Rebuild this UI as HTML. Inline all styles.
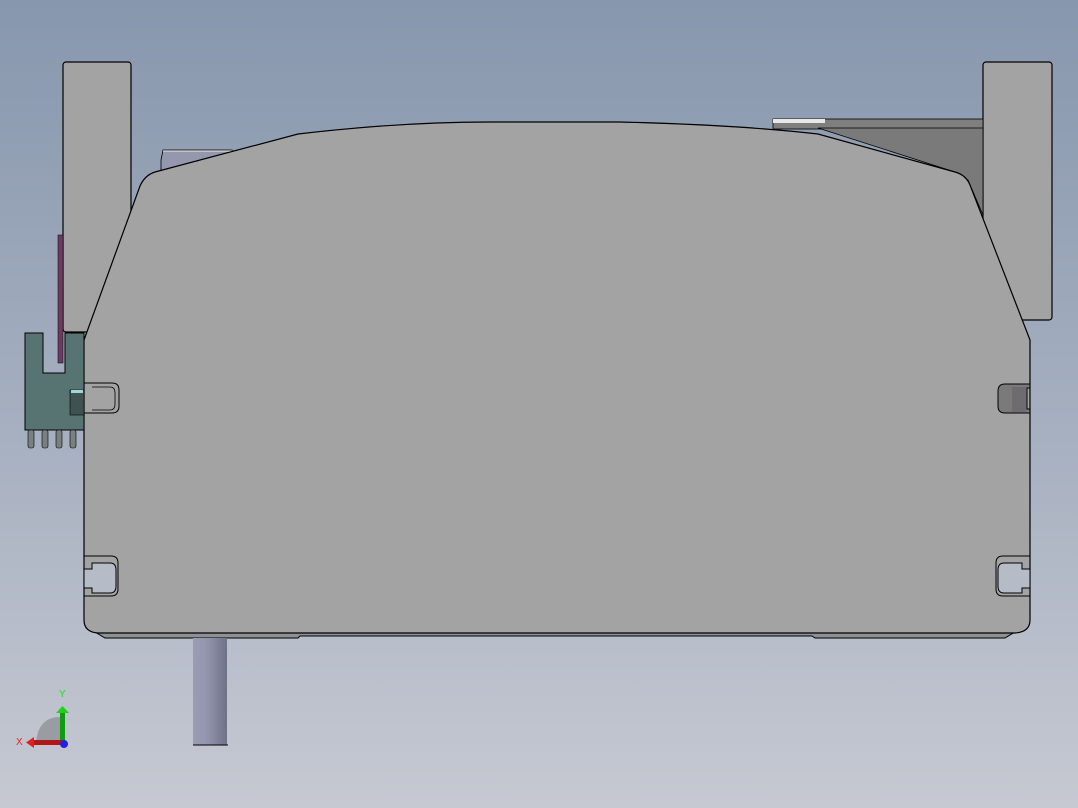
<!DOCTYPE html>
<html><head><style>
html,body{margin:0;padding:0;width:1078px;height:808px;overflow:hidden}
svg{display:block}
</style></head><body>
<svg width="1078" height="808" viewBox="0 0 1078 808" xmlns="http://www.w3.org/2000/svg">
<defs>
<linearGradient id="bg" x1="0" y1="0" x2="0" y2="1">
<stop offset="0" stop-color="#8797ad"/><stop offset="0.5" stop-color="#a4aebf"/><stop offset="1" stop-color="#c6c9d2"/>
</linearGradient>
<linearGradient id="pin" x1="0" y1="0" x2="1" y2="0">
<stop offset="0" stop-color="#9a9db4"/><stop offset="0.4" stop-color="#9396ae"/><stop offset="1" stop-color="#6f7186"/>
</linearGradient>
</defs>
<rect width="1078" height="808" fill="url(#bg)"/>
<rect x="63" y="62" width="68" height="270" rx="3" fill="#a3a3a3" stroke="#000" stroke-width="1.2"/>
<rect x="983" y="62" width="69" height="258" rx="3" fill="#a3a3a3" stroke="#000" stroke-width="1.2"/>
<path d="M161,160 L163,150 L232,150 L232,162 L161,170Z" fill="#9497ae" stroke="#000" stroke-width="0.8"/>
<line x1="163" y1="151" x2="232" y2="151" stroke="#eee" stroke-width="1"/>
<rect x="773" y="119" width="210" height="10" fill="#7f7f7f" stroke="#000" stroke-width="0.8"/>
<rect x="773" y="119" width="52" height="4" fill="#e8e8e8"/>
<path d="M818,128 L983,128 L983,215 L968,180 L955,172Z" fill="#7a7a7a" stroke="#000" stroke-width="0.8"/>
<rect x="58" y="235" width="5" height="128" fill="#6a3c62" stroke="#000" stroke-width="0.5"/>
<path d="M95,632 L1015,632 L1005,638 L815,638 L812,636 L300,636 L298,638 L105,638Z" fill="#8e9093" stroke="#000" stroke-width="1"/>
<rect x="193" y="638" width="34" height="107" fill="url(#pin)"/>
<line x1="193" y1="745" x2="228" y2="745" stroke="#000"/>
<path d="M84,340 L140,186 Q145,175 155,172 L298,134 Q400,122 490,122 L620,122 Q740,125 818,134 L955,172 Q966,175 970,185 L1030,340 L1030,620 Q1030,632 1015,633 L98,633 Q84,632 84,620Z" fill="#a3a3a3" stroke="#000" stroke-width="1.2"/>
<!-- left mid slot -->
<path d="M84,383 L112,383 Q119,383 119,390 L119,406 Q119,413 112,413 L84,413" fill="none" stroke="#000" stroke-width="1"/>
<path d="M92,387 L110,387 Q115,387 115,393 L115,404 Q115,410 110,410 L92,410" fill="none" stroke="#000" stroke-width="0.8"/>
<!-- bottom slots -->
<g stroke="#000" stroke-width="1">
<path d="M84,569 L92,569 L92,563 L110,563 Q116,563 116,570 L116,586 Q116,593 110,593 L92,593 L92,588 L84,588Z" fill="#b5bbc7"/>
<path d="M84,556 L111,556 Q118,556 118,563 L118,589 Q118,596 111,596 L84,596" fill="none"/>
<path d="M1030,569 L1022,569 L1022,563 L1004,563 Q998,563 998,570 L998,586 Q998,593 1004,593 L1022,593 L1022,588 L1030,588Z" fill="#b5bbc7"/>
<path d="M1030,556 L1003,556 Q996,556 996,563 L996,589 Q996,596 1003,596 L1030,596" fill="none"/>
<path d="M1030,384 L1005,384 Q998,384 998,391 L998,406 Q998,413 1005,413 L1030,413 L1030,409 L1027,409 L1027,388 L1030,388Z" fill="#7a7a7a"/>
</g>
<rect x="1012" y="387" width="14" height="25" fill="#6e6c70"/>
<path d="M25,333 L43,333 L43,373 L65,373 L65,333 L84,333 L84,430 L25,430Z" fill="#587472" stroke="#000" stroke-width="1"/>
<rect x="70" y="390" width="14" height="25" fill="#3e5351" stroke="#000" stroke-width="0.6"/>
<rect x="71" y="390" width="12" height="3" fill="#9fd6d3"/>
<g fill="#7a7f80" stroke="#000" stroke-width="0.6">
<rect x="28" y="430" width="6" height="18" rx="2"/>
<rect x="42" y="430" width="6" height="18" rx="2"/>
<rect x="56" y="430" width="6" height="18" rx="2"/>
<rect x="70" y="430" width="6" height="18" rx="2"/>
</g>
<path d="M36,743 Q38,716 62,717 L62,743Z" fill="#9a9ca3"/>
<rect x="60" y="711" width="5" height="32" fill="#139a13"/>
<path d="M56,713 L62.5,706 L69,713Z" fill="#1fd01f"/>
<rect x="32" y="740" width="31" height="5" fill="#b01818"/>
<path d="M34,737 L26,742.5 L34,748Z" fill="#e02020"/>
<circle cx="64" cy="744" r="4" fill="#2222dd"/>
<text x="59" y="697" font-family="Liberation Sans, sans-serif" font-size="10" fill="#22dd22">Y</text>
<text x="16" y="745" font-family="Liberation Sans, sans-serif" font-size="10" fill="#ee2222">X</text>
</svg>
</body></html>
